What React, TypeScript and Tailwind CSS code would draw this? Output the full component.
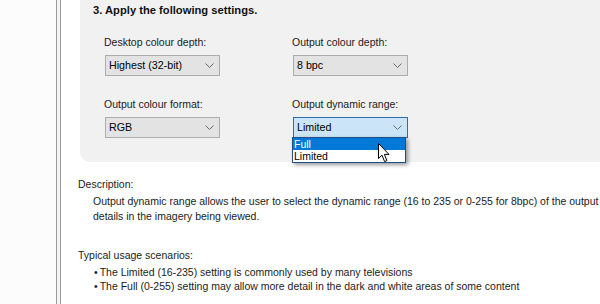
import React from "react";

const font = { fontFamily: '"Liberation Sans", Arial, sans-serif' };

function Chevron() {
  return (
    <svg width="9" height="5" viewBox="0 0 9 5" className="shrink-0">
      <path d="M0.5 0.5 L4.5 4.5 L8.5 0.5" fill="none" stroke="#6a6a6a" strokeWidth="1" />
    </svg>
  );
}

function Select({ value, active = false }: { value: string; active?: boolean }) {
  return (
    <div
      className={
        "flex h-[21px] w-[115px] items-center justify-between pl-[3px] pr-[5px] text-[10.7px] text-black " +
        (active ? "border border-[#2f6fa8] bg-[#cce4f7]" : "border border-[#adadad] bg-[#e3e3e3]")
      }
    >
      <span>{value}</span>
      <Chevron />
    </div>
  );
}

function Field({ label, value, active }: { label: string; value: string; active?: boolean }) {
  return (
    <div className="flex flex-col">
      <span className="text-[10.5px] leading-[16px] text-[#1b1b1b]">{label}</span>
      <div className="mt-[5px] ml-[1px]">
        <Select value={value} active={active} />
      </div>
    </div>
  );
}

function Cursor() {
  return (
    <svg width="13" height="20" viewBox="0 0 13 20" className="absolute left-[378px] top-[143px]">
      <path
        d="M0.5 0.5 L0.5 15.5 L4 12.2 L6.6 18.6 L8.9 17.6 L6.4 11.4 L11 11.4 Z"
        fill="#fff"
        stroke="#000"
        strokeWidth="1"
      />
    </svg>
  );
}

export default function App() {
  return (
    <div className="relative flex h-[304px] w-[600px] overflow-hidden bg-white" style={font}>
      <div className="w-[56px] shrink-0 bg-[#fcfcfc]" />
      <div className="w-[5px] shrink-0 border-x border-x-[#9c9c9c] bg-[#f4f4f4]" />

      <div className="flex min-w-0 flex-1 flex-col">
        <div className="ml-[19px] h-[162px] rounded-bl-[10px] bg-[#f1f1f1] pl-[13px]">
          <div className="mt-[2px] text-[11.2px] font-bold leading-[16px] text-[#111]">
            3. Apply the following settings.
          </div>
          <div className="mt-[16px] ml-[11px] grid grid-cols-[188px_188px] gap-y-[20px]">
            <Field label="Desktop colour depth:" value="Highest (32-bit)" />
            <Field label="Output colour depth:" value="8 bpc" />
            <Field label="Output colour format:" value="RGB" />
            <Field label="Output dynamic range:" value="Limited" active />
          </div>
        </div>

        <div className="ml-[17px] text-[10.5px] text-[#1b1b1b]">
          <div className="mt-[15px] leading-[14px]">Description:</div>
          <div className="mt-[3px] pl-[15px] leading-[14.5px] whitespace-nowrap">
            <div>
              Output dynamic range allows the user to select the dynamic range (16 to 235 or 0-255 for 8bpc) of the output
            </div>
            <div>details in the imagery being viewed.</div>
          </div>
          <div className="mt-[25px] leading-[14px]">Typical usage scenarios:</div>
          <ul className="mt-[4px] pl-[16px] leading-[13.5px] whitespace-nowrap">
            <li className="flex gap-[2px]">
              <span>•</span>
              <span>The Limited (16-235) setting is commonly used by many televisions</span>
            </li>
            <li className="flex gap-[2px]">
              <span>•</span>
              <span>The Full (0-255) setting may allow more detail in the dark and white areas of some content</span>
            </li>
          </ul>
        </div>
      </div>

      <div className="absolute left-[292px] top-[137px] w-[114px] border border-[#1f4f86] bg-white text-[10.5px] leading-[12px] shadow-[2px_2px_4px_rgba(0,0,0,0.4)]">
        <div className="bg-[#0078d7] pl-[1px] text-white">Full</div>
        <div className="pl-[1px] text-black">Limited</div>
      </div>
      <Cursor />
    </div>
  );
}
